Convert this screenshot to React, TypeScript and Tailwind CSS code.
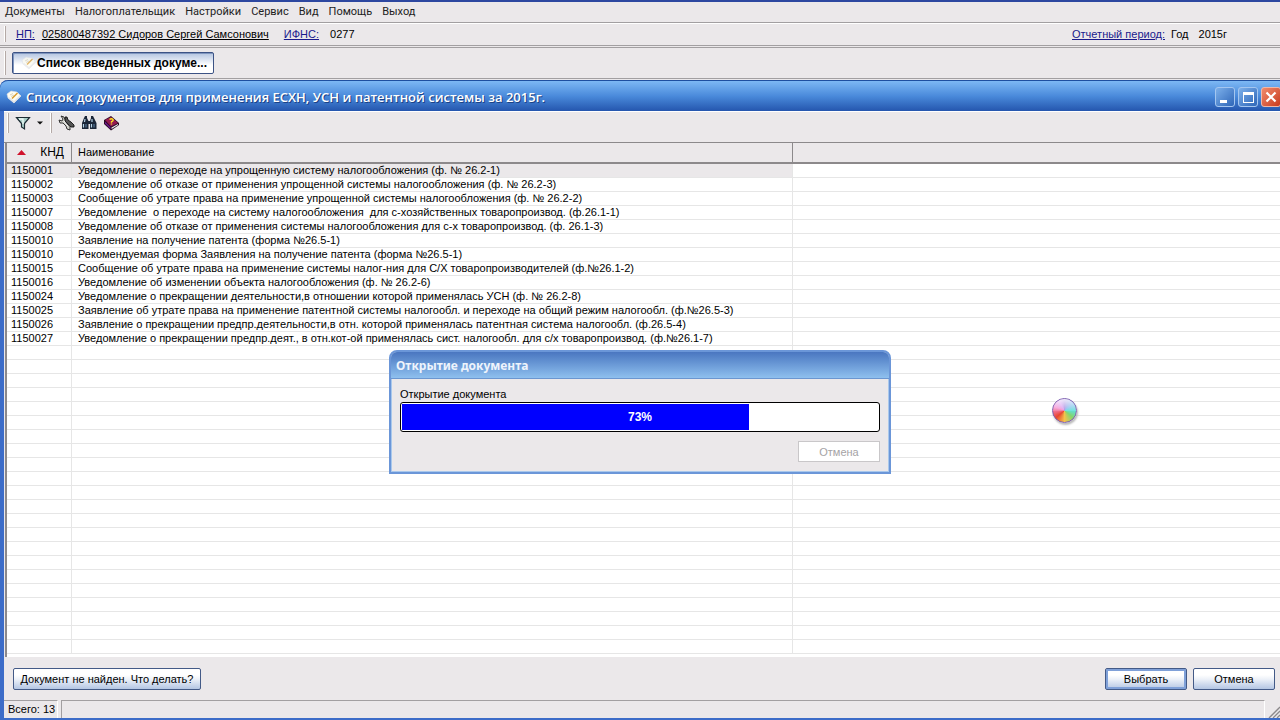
import clsx from 'clsx';

const menuItems = ['Документы', 'Налогоплательщик', 'Настройки', 'Сервис', 'Вид', 'Помощь', 'Выход'];

const documents = [
  { code: '1150001', name: 'Уведомление о переходе на упрощенную систему налогообложения (ф. № 26.2-1)' },
  { code: '1150002', name: 'Уведомление об отказе от применения упрощенной системы налогообложения (ф. № 26.2-3)' },
  { code: '1150003', name: 'Сообщение об утрате права на применение упрощенной системы налогообложения (ф. № 26.2-2)' },
  { code: '1150007', name: 'Уведомление  о переходе на систему налогообложения  для с-хозяйственных товаропроизвод. (ф.26.1-1)' },
  { code: '1150008', name: 'Уведомление об отказе от применения системы налогообложения для с-х товаропроизвод. (ф. 26.1-3)' },
  { code: '1150010', name: 'Заявление на получение патента (форма №26.5-1)' },
  { code: '1150010', name: 'Рекомендуемая форма Заявления на получение патента (форма №26.5-1)' },
  { code: '1150015', name: 'Сообщение об утрате права на применение системы налог-ния для С/Х товаропроизводителей (ф.№26.1-2)' },
  { code: '1150016', name: 'Уведомление об изменении объекта налогообложения (ф. № 26.2-6)' },
  { code: '1150024', name: 'Уведомление о прекращении деятельности,в отношении которой применялась УСН (ф. № 26.2-8)' },
  { code: '1150025', name: 'Заявление об утрате права на применение патентной системы налогообл. и переходе на общий режим налогообл. (ф.№26.5-3)' },
  { code: '1150026', name: 'Заявление о прекращении предпр.деятельности,в отн. которой применялась патентная система налогообл. (ф.26.5-4)' },
  { code: '1150027', name: 'Уведомление о прекращении предпр.деят., в отн.кот-ой применялась сист. налогообл. для с/х товаропроизвод. (ф.№26.1-7)' },
];

const EMPTY_ROWS = 22;
const progress = 73;

function DocIcon({ faded = false }: { faded?: boolean }) {
  return (
    <svg width="16" height="16" viewBox="0 0 16 16" className={clsx('shrink-0', faded && 'opacity-70')}>
      <path d="M1 5 L5 2 L11 3 L15 7 L8 14 L2 9 Z" fill="#fffdf0" stroke="#d9dce4" strokeWidth="0.6" />
      <path d="M2 9 L8 14 L15 7 L14 6 L8 12 L3 8 Z" fill="#e2e4e8" />
      <path d="M6 9.500 L11.500 4" stroke="#d99a2b" strokeWidth="1.400" />
      <path d="M4 6 L7 4.500 M5 7.500 L8 6" stroke="#c8c0a8" strokeWidth="0.7" />
    </svg>
  );
}

function FilterIcon() {
  return (
    <svg width="16" height="16" viewBox="0 0 16 16">
      <path d="M1.500 2.500 H14.500 L9.500 8.500 V14 L6.500 12 V8.500 Z" fill="#a9cfc9" stroke="#1c2b33" strokeWidth="1.200" />
      <path d="M4 4 H8 L8 9" fill="none" stroke="#eefaf7" strokeWidth="1.300" />
    </svg>
  );
}

function WrenchIcon() {
  return (
    <svg width="17" height="16" viewBox="0 0 17 16">
      <path d="M7 2 L9 2 L10 5 L13 7 L16 10 L16 12 L13 12 L9 8 L7 6 Z" fill="#555" stroke="#111" strokeWidth="0.9" />
      <path
        d="M3 1 L6 2 L7 5 L7 7 L10 10 L12 11 L12 15 L9 14 L8 11 L5 8 L2 8 L1 5 L4 6 L5 4 Z"
        fill="#d2d2cb"
        stroke="#222"
        strokeWidth="0.9"
      />
      <path d="M6 6 L10 11" stroke="#fff" strokeWidth="1" />
    </svg>
  );
}

function BinocularsIcon() {
  return (
    <svg width="16" height="16" viewBox="0 0 16 16">
      <path d="M4 1 H6 V3 L7.500 6 V14 H1 V8 L3 3 Z" fill="#1b2638" />
      <path d="M10 1 H12 L13 3 L15.500 8 V14 H9 V6 L10 3 Z" fill="#1b2638" />
      <path d="M7 6 H10 V9 H7 Z" fill="#1b2638" />
      <path d="M2.500 9 V12.500 M4 4 L3.500 7 M10.500 9 V12.500 M11 4 V7" stroke="#b5d3e8" strokeWidth="1.200" />
      <path d="M5 9 V12.500 M13 9 V12.500" stroke="#56779a" strokeWidth="1.200" />
    </svg>
  );
}

function HelpBookIcon() {
  return (
    <svg width="17" height="16" viewBox="0 0 17 16">
      <path d="M1 5 L8 1 L16 8 V10 L8 15.500 L1 9 Z" fill="#2b0a24" />
      <path d="M2 5 L8 2 L15 8 L8 11.500 Z" fill="#951a50" />
      <path d="M8.500 12.500 L15 9 V10 L8.500 14 Z" fill="#f0f0f0" />
      <path d="M2 6.500 L7.500 12 V14 L2 8.500 Z" fill="#6d1a8b" />
      <path d="M6.500 4.500 Q8.500 3 10 4.500 Q10.500 6 8.500 6.700 V7.700 M8.500 8.500 V9.600" fill="none" stroke="#ffe11f" strokeWidth="1.400" />
    </svg>
  );
}

function Grip({ className }: { className: string }) {
  return <span className={clsx('w-px shrink-0 bg-[#b4a9a6] shadow-[-1px_0_0_#fff]', className)} />;
}

const buttonBase =
  'h-[22px] shrink-0 rounded-[2px] border border-[#435a87] bg-linear-to-b from-white from-30% via-[#eef2f9] to-[#b4c6e3] text-center text-[11px] leading-[14px] text-black';

const captionButton =
  'flex size-5 shrink-0 items-center justify-center rounded-[3px] border border-[#a4c6f0] bg-linear-to-br from-[#7db0ea] to-[#2e66b8]';

function TopBars() {
  return (
    <header className="border-t-2 border-[#2d47a0] bg-[#ebe8ea]">
      <nav className="flex h-[21px] items-center gap-[10px] border-b border-[#a29fa1] px-[5px] font-[Roboto,sans-serif] text-[11px] leading-[14px]">
        {menuItems.map((item) => (
          <button key={item} type="button" className="text-[#222]">
            {item}
          </button>
        ))}
      </nav>
      <div className="flex h-[23px] items-center border-t border-b border-t-white border-b-[#a29fa1] pb-px pl-[5px] text-[11px] leading-[14px] whitespace-nowrap">
        <Grip className="h-4" />
        <a href="#np" className="ml-[10px] text-[#1a1a8c] underline underline-offset-1">НП:</a>
        <a href="#payer" className="ml-[7px] text-black underline underline-offset-1">025800487392 Сидоров Сергей Самсонович</a>
        <a href="#ifns" className="ml-[15px] text-[#1a1a8c] underline underline-offset-1">ИФНС:</a>
        <span className="ml-[11px]">0277</span>
        <a href="#period" className="ml-auto text-[#1a1a8c] underline underline-offset-1">Отчетный период:</a>
        <span className="ml-[6px]">Год</span>
        <span className="mr-[53px] ml-[10px]">2015г</span>
      </div>
      <div className="mt-px flex h-8 items-center border-t border-b border-[#a29fa1] pl-[5px]">
        <Grip className="h-6" />
        <button
          type="button"
          className="ml-[6px] flex h-[22px] w-[202px] items-center rounded-[2px] border border-[#3c5385] bg-linear-to-b from-[#b3c4e0] to-white to-60% pl-2 text-[12px] leading-[14px] font-bold whitespace-nowrap shadow-[inset_1px_1px_0_#7f96bf]"
        >
          <DocIcon faded />
          <span>Список введенных докуме...</span>
        </button>
      </div>
    </header>
  );
}

function TitleBar() {
  return (
    <div className="flex h-[31px] items-center rounded-tl-lg border-t border-[#1e4fa0] bg-linear-to-b from-[#7db8f4] via-[#4a8adb] via-50% to-[#2556ae] pt-[2px] pl-[6px]">
      <DocIcon />
      <h1 className="ml-1 font-['Open_Sans','Noto_Sans',sans-serif] text-[13px] leading-[16px] font-semibold whitespace-nowrap text-white [text-shadow:1px_1px_0_#1c4286]">
        Список документов для применения ЕСХН, УСН и патентной системы за 2015г.
      </h1>
      <div className="ml-auto flex gap-[3px] overflow-hidden">
        <button type="button" aria-label="Свернуть" className={captionButton}>
          <span className="mt-2 mr-1 h-[3px] w-[7px] bg-white" />
        </button>
        <button type="button" aria-label="Развернуть" className={captionButton}>
          <span className="h-[11px] w-[11px] border border-t-[3px] border-white" />
        </button>
        <button
          type="button"
          aria-label="Закрыть"
          className="-mr-[1px] flex size-5 shrink-0 items-center justify-center rounded-[3px] border border-[#f0b8a8] bg-linear-to-br from-[#f08a6c] to-[#c8381a]"
        >
          <svg width="12" height="12" viewBox="0 0 12 12">
            <path d="M1.500 1.500 L10.500 10.500 M10.500 1.500 L1.500 10.500" stroke="#fff" strokeWidth="2.200" />
          </svg>
        </button>
      </div>
    </div>
  );
}

function Toolbar() {
  return (
    <div className="flex h-8 items-center border-t border-b border-t-white border-b-[#8c898b] pb-2 pl-1">
      <Grip className="h-5" />
      <button type="button" aria-label="Фильтр" className="ml-[6px]">
        <FilterIcon />
      </button>
      <button type="button" aria-label="Меню фильтра" className="ml-[6px]">
        <svg width="6" height="4" viewBox="0 0 6 4">
          <path d="M0 0.500 H6 L3 3.500 Z" fill="#111" />
        </svg>
      </button>
      <Grip className="ml-2 h-5" />
      <div className="ml-[6px] flex gap-[6px]">
        <button type="button" aria-label="Настройка"><WrenchIcon /></button>
        <button type="button" aria-label="Поиск"><BinocularsIcon /></button>
        <button type="button" aria-label="Справка"><HelpBookIcon /></button>
      </div>
    </div>
  );
}

function DocumentTable() {
  return (
    <div className="ml-px flex-1 overflow-hidden border-l-2 border-[#8c898b] bg-white">
      <table className="w-full table-fixed border-separate border-spacing-0 text-left text-[11px] leading-[13px] whitespace-pre">
        <colgroup>
          <col className="w-[65px]" />
          <col className="w-[721px]" />
          <col />
        </colgroup>
        <thead>
          <tr className="h-[21px] bg-[#ebe8ea]">
            <th className="border-r border-b-2 border-[#8c898b] p-0 pr-[7px] font-normal">
              <span className="flex items-center justify-between pl-[10px]">
                <svg width="9" height="5" viewBox="0 0 9 5">
                  <path d="M4.500 0 L9 5 H0 Z" fill="#d0122c" />
                </svg>
                <span className="text-[12px]">КНД</span>
              </span>
            </th>
            <th className="border-r border-b-2 border-[#8c898b] p-0 pl-[6px] font-normal">Наименование</th>
            <th className="border-b-2 border-[#8c898b] p-0" />
          </tr>
        </thead>
        <tbody>
          {documents.map((doc, index) => (
            <tr key={index} className="h-[14px]">
              <td className={clsx('border-r border-b border-[#e6e6e6] p-0 pl-1', index === 0 && 'bg-[#ebe8ea]')}>{doc.code}</td>
              <td className={clsx('border-r border-b border-[#e6e6e6] p-0 pl-[6px]', index === 0 && 'bg-[#ebe8ea]')}>{doc.name}</td>
              <td className="border-b border-[#e6e6e6] p-0" />
            </tr>
          ))}
          {Array.from({ length: EMPTY_ROWS }, (_, index) => (
            <tr key={index} className="h-[14px]">
              <td className="border-r border-b border-[#e6e6e6] p-0" />
              <td className="border-r border-b border-[#e6e6e6] p-0" />
              <td className="border-b border-[#e6e6e6] p-0" />
            </tr>
          ))}
        </tbody>
      </table>
    </div>
  );
}

function Footer() {
  return (
    <footer>
      <div className="flex h-[43px] items-center gap-[6px] pr-[5px] pl-[9px]">
        <button type="button" className={clsx(buttonBase, 'w-[188px] whitespace-nowrap')}>
          Документ не найден. Что делать?
        </button>
        <button type="button" className={clsx(buttonBase, 'ml-auto w-[82px] shadow-[inset_0_0_0_2px_#7fa0d8]')}>
          Выбрать
        </button>
        <button type="button" className={clsx(buttonBase, 'w-[82px]')}>Отмена</button>
      </div>
      <div className="flex h-[18px] gap-[3px] text-[11px] leading-[16px]">
        <span className="w-[54px] border-t border-r border-t-[#a29fa1] border-r-white pl-1 whitespace-nowrap">Всего: 13</span>
        <span className="flex-1 border-t border-r border-l border-[#a29fa1] border-r-white" />
        <svg width="12" height="16" viewBox="0 0 12 16" className="self-end">
          <path d="M1 16 L12 5 M5 16 L12 9 M9 16 L12 13" stroke="#8c898b" strokeWidth="1.300" />
        </svg>
      </div>
    </footer>
  );
}

function ProgressDialog() {
  return (
    <div
      role="dialog"
      aria-labelledby="dialog-title"
      className="absolute top-[350px] left-1/2 w-[502px] -translate-x-1/2 rounded-t-lg border-2 border-[#6b96d8] bg-[#ebe8ea] shadow-[inset_0_0_0_1px_#a9c8ec]"
    >
      <h2
        id="dialog-title"
        className="h-[27px] rounded-t-md border-b border-[#6b96d0] bg-linear-to-b from-[#4a76c0] to-[#8fc0ee] pl-[5px] font-['Noto_Sans','Open_Sans',sans-serif] text-[12px] leading-[28px] font-bold text-[#eef4fc]"
      >
        Открытие документа
      </h2>
      <div className="px-[9px] pt-2 pb-[10px] text-[11px] leading-[14px]">
        <p>Открытие документа</p>
        <div
          role="progressbar"
          aria-valuenow={progress}
          className="relative mt-px h-[30px] rounded-[3px] border border-black bg-white p-px"
        >
          <div className="h-full bg-[#0000ff]" style={{ width: `${progress}%` }} />
          <span className="absolute inset-0 flex items-center justify-center text-[12px] font-bold text-white">{progress}%</span>
        </div>
        <div className="mt-[9px] flex justify-end">
          <button type="button" disabled className="h-[21px] w-[82px] border border-[#c9c7c9] bg-white text-[#a5a3a5]">
            Отмена
          </button>
        </div>
      </div>
    </div>
  );
}

function BusyCursor() {
  return (
    <span className="absolute top-[398px] left-[1052px] size-[25px] rounded-full border border-[#7a5cae] bg-[conic-gradient(#a58ae0,#7fb8ee_50deg,#5fe0d8_90deg,#84d66e_130deg,#f5c24a_180deg,#e8452e_230deg,#f58ad0_290deg,#d59af0_330deg,#a58ae0)] shadow-[1px_2px_2px_#bbb]">
      <span className="block h-3 rounded-t-full bg-linear-to-b from-white/80 to-white/10" />
    </span>
  );
}

export default function App() {
  return (
    <div className="relative flex min-h-screen flex-col overflow-hidden bg-[#ebe8ea] font-['Liberation_Sans',Arial,sans-serif] text-black">
      <TopBars />
      <main className="mt-px flex flex-1 flex-col rounded-tl-lg border-b-2 border-l-4 border-[#3c6cc8] bg-[#ebe8ea]">
        <div className="-ml-1">
          <TitleBar />
        </div>
        <Toolbar />
        <DocumentTable />
        <Footer />
      </main>
      <ProgressDialog />
      <BusyCursor />
    </div>
  );
}
